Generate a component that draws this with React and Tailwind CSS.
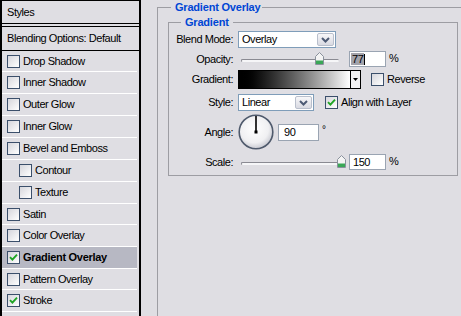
import React from "react";

function Check({ checked }) {
  return (
    <span className="w-[13px] h-[13px] shrink-0 border border-[#3b4f6b] bg-linear-to-br from-[#d6d6dc] to-white flex items-center justify-center">
      {checked && (
        <svg width="9" height="9" viewBox="0 0 9 9">
          <path d="M1 4.2 L3.4 6.6 L8 1.6" fill="none" stroke="#1fa524" strokeWidth="1.9" />
        </svg>
      )}
    </span>
  );
}

function Chevron() {
  return (
    <span className="w-[17px] h-full shrink-0 border border-[#b9bfcc] rounded-[2px] bg-linear-to-b from-[#f7f7f9] to-[#d9dae2] flex items-center justify-center">
      <svg width="9" height="6" viewBox="0 0 9 6">
        <path d="M1 1 L4.5 4.5 L8 1" fill="none" stroke="#4d5a74" strokeWidth="2" />
      </svg>
    </span>
  );
}

function Thumb() {
  return (
    <svg width="9" height="13" viewBox="0 0 9 13">
      <path d="M0.5 12.5 V4.5 L4.5 0.5 L8.5 4.5 V12.5 Z" fill="#f4f4f4" stroke="#8a919c" />
      <rect x="1" y="8.5" width="7" height="3.5" fill="#3aa757" />
    </svg>
  );
}

function Slider({ pos }) {
  return (
    <div className="relative w-[107px] h-full shrink-0">
      <div className="absolute left-[3px] top-[8px] w-[98px] h-[3px] rounded-[2px] border-t border-l border-[#8a8a92] bg-[#f6f6f8]" />
      <div className={`absolute top-[1px] ${pos}`}>
        <Thumb />
      </div>
    </div>
  );
}

const rows = [
  { label: "Drop Shadow", h: "h-[21px]" },
  { label: "Inner Shadow", h: "h-[22px]" },
  { label: "Outer Glow", h: "h-[22px]" },
  { label: "Inner Glow", h: "h-[22px]" },
  { label: "Bevel and Emboss", h: "h-[22px]" },
  { label: "Contour", h: "h-[22px]", indent: true },
  { label: "Texture", h: "h-[22px]", indent: true },
  { label: "Satin", h: "h-[21px]" },
  { label: "Color Overlay", h: "h-[22px]" },
  { label: "Gradient Overlay", h: "h-[22px]", checked: true, active: true },
  { label: "Pattern Overlay", h: "h-[21px]" },
  { label: "Stroke", h: "h-[22px]", checked: true },
  { label: "", h: "h-[22px]", empty: true },
];

export default function App() {
  return (
    <div className="w-[461px] h-[316px] overflow-hidden bg-[#dfdee3] flex font-['Liberation_Sans',Arial,sans-serif] text-[11px] leading-[13px] text-black tracking-[-0.45px]">
      {/* Left styles list */}
      <div className="w-[141px] h-[330px] shrink-0 border-x-2 border-t border-black flex flex-col">
        <div className="h-[22px] shrink-0 flex items-center pl-[5px]">Styles</div>
        <div className="h-[4px] shrink-0 border-y border-black" />
        <div className="h-[24px] shrink-0 flex items-center pl-[5px] border-b border-black">
          Blending Options: Default
        </div>
        {rows.map((r, i) => (
          <div
            key={i}
            className={`${r.h} shrink-0 flex items-center gap-[3px] border-b border-white mr-[2px] ${
              r.indent ? "pl-[17px]" : "pl-[5px]"
            } ${r.active ? "bg-[#b7b8c3] font-bold tracking-[-0.3px]" : ""}`}
          >
            {!r.empty && <Check checked={r.checked} />}
            {!r.empty && <span>{r.label}</span>}
          </div>
        ))}
      </div>

      {/* Right settings */}
      <div className="pl-[16px] shrink-0">
        <fieldset className="w-[340px] h-[340px] border border-[#9d9da3] pl-[10px]">
          <legend className="ml-[3px] pl-[4px] pr-[2px] leading-[14px] font-bold text-[#0046d5] tracking-[-0.2px]">
            Gradient Overlay
          </legend>
          <fieldset className="mt-[1px] w-[290px] border border-[#9d9da3] pt-[2px] pb-[5px]">
            <legend className="ml-[12px] px-[4px] leading-[14px] font-bold text-[#0046d5] tracking-[-0.2px]">
              Gradient
            </legend>

            {/* Blend Mode */}
            <div className="h-[17px] flex items-center">
              <span className="w-[64px] text-right">Blend Mode:</span>
              <div className="ml-[5px] w-[98px] h-[17px] border border-[#7f9db9] bg-white flex items-center p-[1px]">
                <span className="flex-1 pl-[2px]">Overlay</span>
                <Chevron />
              </div>
            </div>

            {/* Opacity */}
            <div className="mt-[3px] h-[16px] flex items-center">
              <span className="w-[64px] text-right">Opacity:</span>
              <div className="ml-[5px] h-full flex items-center">
                <Slider pos="left-[77px]" />
                <div className="ml-[4px] w-[37px] h-[16px] border border-[#9aa4b2] bg-white flex items-center pl-[1px]">
                  <span className="bg-[#a3a3ab] px-[1px] leading-[12px]">77</span>
                  <span className="w-px h-[11px] bg-black" />
                </div>
                <span className="ml-[3px] self-start mt-[1px]">%</span>
              </div>
            </div>

            {/* Gradient */}
            <div className="mt-[3px] h-[19px] flex items-center">
              <span className="w-[64px] text-right">Gradient:</span>
              <div className="ml-[5px] w-[123px] h-[19px] border border-black flex">
                <div className="flex-1 bg-linear-to-r from-black to-white" />
                <div className="w-[10px] border-l border-black bg-[#f2f2f4] flex items-center justify-center">
                  <svg width="5" height="3" viewBox="0 0 5 3">
                    <path d="M0 0 H5 L2.5 3 Z" fill="#000" />
                  </svg>
                </div>
              </div>
              <div className="ml-[10px] flex items-center gap-[3px]">
                <Check />
                <span>Reverse</span>
              </div>
            </div>

            {/* Style */}
            <div className="mt-[5px] h-[17px] flex items-center">
              <span className="w-[64px] text-right">Style:</span>
              <div className="ml-[5px] w-[76px] h-[17px] border border-[#7f9db9] bg-white flex items-center p-[1px]">
                <span className="flex-1 pl-[2px]">Linear</span>
                <Chevron />
              </div>
              <div className="ml-[11px] flex items-center gap-[3px]">
                <Check checked />
                <span>Align with Layer</span>
              </div>
            </div>

            {/* Angle */}
            <div className="mt-[3px] h-[36px] flex items-center">
              <span className="w-[64px] text-right">Angle:</span>
              <svg className="ml-[5px]" width="36" height="36" viewBox="0 0 36 36">
                <defs>
                  <radialGradient id="dial" cx="45%" cy="40%" r="60%">
                    <stop offset="0%" stopColor="#ffffff" />
                    <stop offset="70%" stopColor="#f0f0f2" />
                    <stop offset="100%" stopColor="#c9cad2" />
                  </radialGradient>
                </defs>
                <circle cx="18" cy="18" r="16.8" fill="url(#dial)" stroke="#4f5a6c" strokeWidth="1.6" />
                <line x1="18" y1="18" x2="18" y2="2" stroke="#000" strokeWidth="1.6" />
                <rect x="16.5" y="16.5" width="3" height="3" fill="#000" />
              </svg>
              <div className="ml-[4px] w-[41px] h-[17px] border border-[#9aa4b2] bg-white flex items-center pl-[5px]">
                90
              </div>
              <span className="ml-[3px] self-start mt-[9px] text-[10px]">°</span>
            </div>

            {/* Scale */}
            <div className="mt-[4px] h-[16px] flex items-center">
              <span className="w-[64px] text-right">Scale:</span>
              <div className="ml-[5px] h-full flex items-center">
                <Slider pos="left-[99px]" />
                <div className="ml-[4px] w-[37px] h-[16px] border border-[#9aa4b2] bg-white flex items-center pl-[3px]">
                  150
                </div>
                <span className="ml-[3px] self-start mt-[1px]">%</span>
              </div>
            </div>
          </fieldset>
        </fieldset>
      </div>
    </div>
  );
}
